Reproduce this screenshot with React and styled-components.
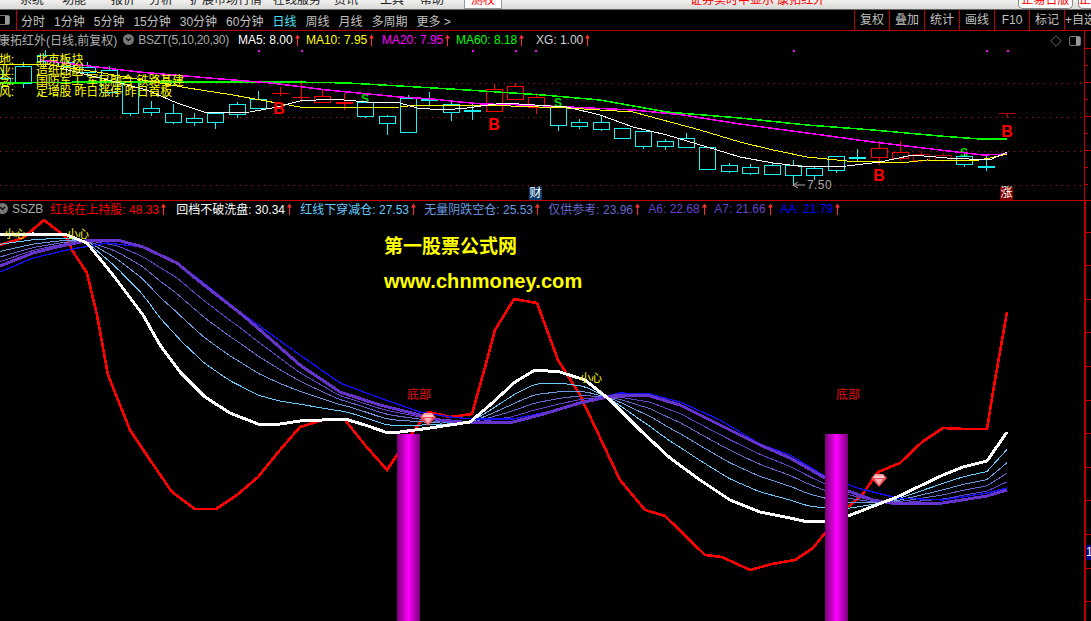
import styled, { createGlobalStyle } from "styled-components";

const GlobalStyle = createGlobalStyle`
  html, body {
    margin: 0;
    padding: 0;
    background: #000;
  }
`;

const FONT = `"Liberation Sans", "Noto Sans CJK SC", sans-serif`;
const RED = "#ff0000";
const CYAN = "#19f0f0";
const DARK = "#c00000";

const Page = styled.div`
  width: 1091px;
  height: 621px;
  overflow: hidden;
  background: #000;
  font-family: ${FONT};
  font-size: 12px;
  display: flex;
  flex-direction: column;
`;

const TopMenu = styled.div`
  height: 9px;
  flex: none;
  display: flex;
  overflow: hidden;
  background: linear-gradient(#f0f0ee, #d8d8d6);
  border-bottom: 1px solid #666;
  color: #222;
`;

const MenuItem = styled.div`
  width: ${(p) => p.$w}px;
  flex: none;
  margin-top: -7px;
  line-height: 14px;
  white-space: nowrap;
  color: ${(p) => (p.$red ? RED : "#222")};
`;

const ActiveTab = styled(MenuItem)`
  margin-top: 0;
  background: #fff;
  border: 1px solid #999;
  border-top: none;
  box-sizing: border-box;
  height: 9px;
  line-height: 0;
  text-align: center;
  color: ${RED};
`;

const RoundButton = styled.div`
  width: ${(p) => p.$w}px;
  flex: none;
  height: 9px;
  box-sizing: border-box;
  margin-right: 5px;
  background: #fff;
  border: 1px solid #888;
  border-top: none;
  border-radius: 0 0 5px 5px;
  line-height: 0;
  text-align: center;
  white-space: nowrap;
  overflow: hidden;
  color: ${RED};
`;

const Toolbar = styled.div`
  height: 20px;
  flex: none;
  display: flex;
  align-items: center;
  border-bottom: 1px solid #c00000;
  color: #c0c0c0;
`;

const PanelToggle = styled.div`
  position: relative;
  width: ${(p) => p.$w}px;
  height: 10px;
  box-sizing: border-box;
  flex: none;
  border: 1px solid #777;
  border-radius: 2px;
  margin-left: ${(p) => p.$ml}px;
  &::after {
    content: "";
    position: absolute;
    right: 0;
    top: 0;
    bottom: 0;
    width: 4px;
    background: #999;
  }
`;

const Periods = styled.div`
  display: flex;
  gap: 9px;
  height: 100%;
  align-items: center;
  margin-left: 6px;
  padding-left: 4px;
  border-left: 1px solid #c00000;
`;

const Period = styled.span`
  color: ${(p) => (p.$active ? "#40e8f8" : "inherit")};
`;

const ToolCells = styled.div`
  margin-left: auto;
  display: flex;
  height: 100%;
`;

const ToolCell = styled.div`
  width: ${(p) => p.$w || 35}px;
  box-sizing: border-box;
  border-left: 1px solid #c00000;
  text-align: center;
  line-height: 20px;
  white-space: nowrap;
  overflow: hidden;
`;

const Panel = styled.div`
  display: flex;
  flex: none;
  height: ${(p) => p.$h}px;
  border-bottom: ${(p) => (p.$last ? "none" : "1px solid #c00000")};
`;

const Plot = styled.div`
  position: relative;
  width: 1084px;
  flex: none;
  overflow: hidden;
`;

const tickLayer = (step) => `repeating-linear-gradient(
  to bottom,
  transparent 0,
  transparent ${step - 1}px,
  #c00000 ${step - 1}px,
  #c00000 ${step}px
)`;

const Axis = styled.div`
  position: relative;
  flex: 1;
  box-sizing: border-box;
  border-left: ${(p) => p.$border}px solid #c00000;
  background-image: ${(p) => tickLayer(p.$long)}, ${(p) => tickLayer(p.$short)};
  background-size: 6px 100%, 3px 100%;
  background-repeat: repeat-y;
  background-position: 0 ${(p) => p.$longOffset}px, 0 ${(p) => p.$shortOffset}px;
`;

const AxisLabel = styled.div`
  position: absolute;
  left: 0;
  top: 344px;
  width: 5px;
  height: 15px;
  background: #000080;
  color: #fff;
  line-height: 15px;
  overflow: hidden;
`;

const Legend = styled.div`
  height: ${(p) => p.$h}px;
  display: flex;
  align-items: center;
  white-space: nowrap;
`;

const Title = styled.span`
  color: #b0b0b0;
  margin-left: -2px;
`;

const Chevron = styled.span`
  width: 11px;
  height: 11px;
  flex: none;
  margin: 0 ${(p) => p.$mr}px 0 ${(p) => p.$ml}px;
  border-radius: 50%;
  background: #777;
  display: flex;
  align-items: center;
  justify-content: center;
`;

const Formula = styled.span`
  color: #a8a8a8;
  letter-spacing: ${(p) => p.$ls || 0}px;
`;

const Reading = styled.span`
  display: flex;
  align-items: center;
  flex: none;
  color: ${(p) => p.$color};
  width: ${(p) => p.$w}px;
  margin-left: ${(p) => p.$ml || 0}px;
`;

const ArrowIcon = styled.svg`
  width: 5px;
  height: 12px;
  margin-left: 2px;
  flex: none;
`;

const CornerIcons = styled.div`
  position: absolute;
  right: 3px;
  top: 4px;
  display: flex;
  align-items: center;
  gap: 7px;
`;

const Chart = styled.svg`
  display: block;
  width: 1084px;
  height: ${(p) => p.$h}px;
`;

const NewsLines = styled.div`
  position: absolute;
  left: 0;
  top: 24px;
  color: #ffff00;
  line-height: 10.6px;
  letter-spacing: -0.2px;
`;

const NewsLine = styled.div`
  display: flex;
  white-space: pre;
`;

const NewsKey = styled.span`
  width: 37px;
  margin-left: -1px;
  flex: none;
`;

const Badge = styled.div`
  position: absolute;
  left: ${(p) => p.$x}px;
  top: ${(p) => p.$y}px;
  width: 13px;
  height: 13px;
  background: ${(p) => p.$bg};
  color: #fff;
  text-align: center;
  line-height: 13px;
`;

const LowPrice = styled.div`
  position: absolute;
  left: 807px;
  top: 147px;
  color: #a8a8a8;
  line-height: 14px;
  letter-spacing: 0.4px;
`;

const Watermark = styled.div`
  position: absolute;
  left: 384px;
  top: 33px;
  color: #ffff00;
  font-weight: bold;
  display: flex;
  flex-direction: column;
  gap: 9px;
`;

const WatermarkTitle = styled.div`
  font-size: 19px;
  line-height: 26px;
`;

const WatermarkUrl = styled.div`
  font-size: 20px;
  line-height: 24px;
  letter-spacing: 0.1px;
`;

const ChartText = styled.text`
  font-family: ${FONT};
  font-size: ${(p) => p.$size || 12}px;
  font-weight: ${(p) => (p.$bold ? "bold" : "normal")};
  fill: ${(p) => p.$color};
  text-anchor: middle;
`;

const candles = [
  [-6, 78, 83, 70, 88, CYAN],
  [15, 66, 83, 62, 88, CYAN],
  [37, 55, 61, 50, 66, CYAN],
  [58, 62, 66, 58, 72, CYAN],
  [79, 67, 72, 62, 76, CYAN],
  [101, 70, 92, 66, 94, CYAN],
  [122, 82, 113, 78, 116, CYAN],
  [143, 108, 112, 101, 116, CYAN],
  [165, 113, 122, 104, 124, CYAN],
  [186, 118, 122, 113, 126, CYAN],
  [207, 113, 122, 113, 129, CYAN],
  [229, 104, 114, 102, 118, CYAN],
  [250, 99, 108, 91, 108, CYAN],
  [272, 93, 93, 87, 96, RED],
  [293, 97, 97, 80, 102, RED],
  [314, 96, 102, 90, 102, RED],
  [336, 102, 104, 93, 110, RED],
  [357, 102, 116, 101, 118, CYAN],
  [379, 116, 123, 115, 135, CYAN],
  [400, 98, 132, 95, 132, CYAN],
  [421, 99, 101, 92, 105, CYAN],
  [443, 104, 112, 100, 121, CYAN],
  [464, 110, 112, 104, 120, CYAN],
  [486, 89, 111, 84, 111, RED],
  [507, 86, 99, 83, 99, RED],
  [528, 97, 107, 93, 114, RED],
  [550, 106, 125, 106, 131, CYAN],
  [571, 122, 126, 119, 129, CYAN],
  [593, 122, 129, 116, 131, CYAN],
  [614, 128, 138, 128, 139, CYAN],
  [635, 131, 146, 131, 149, CYAN],
  [657, 141, 146, 139, 150, CYAN],
  [678, 138, 147, 133, 148, CYAN],
  [699, 147, 169, 147, 169, CYAN],
  [721, 165, 171, 163, 173, CYAN],
  [742, 167, 173, 164, 175, CYAN],
  [764, 165, 174, 163, 175, CYAN],
  [785, 165, 175, 160, 186, CYAN],
  [806, 168, 175, 166, 180, CYAN],
  [828, 156, 170, 156, 173, CYAN],
  [849, 157, 159, 149, 161, CYAN],
  [871, 148, 157, 141, 165, RED],
  [892, 152, 158, 141, 161, RED],
  [913, 154, 160, 151, 163, DARK],
  [935, 155, 160, 153, 162, DARK],
  [956, 156, 164, 152, 167, CYAN],
  [978, 166, 168, 155, 171, CYAN],
  [999, 113, 113, 113, 118, DARK],
];

const priceLines = [
  {
    color: "#00ff00",
    width: 1.5,
    points: [[0, 83], [97, 82], [292, 82], [348, 83], [417, 87], [467, 90], [543, 95], [600, 100], [667, 112], [740, 118], [807, 125], [873, 130], [940, 136], [980, 139], [1007, 139]],
  },
  {
    color: "#ff00ff",
    width: 1.5,
    points: [[40, 60], [97, 67], [139, 72], [209, 78], [271, 83], [327, 90], [400, 97], [433, 99], [460, 102], [483, 104], [527, 105], [590, 108], [633, 110], [683, 115], [740, 124], [807, 133], [873, 142], [940, 150], [983, 155], [1007, 154]],
  },
  {
    color: "#ffff00",
    width: 1,
    points: [[0, 64], [50, 65], [97, 72], [188, 88], [233, 95], [277, 103], [300, 107], [333, 108], [400, 107], [417, 105], [483, 105], [567, 108], [633, 112], [700, 130], [740, 142], [773, 150], [807, 157], [847, 161], [880, 162], [900, 163], [927, 160], [973, 161], [990, 158], [1007, 154]],
  },
  {
    color: "#ffffff",
    width: 1,
    points: [[60, 68], [100, 78], [147, 90], [177, 103], [207, 113], [250, 112], [277, 107], [300, 101], [333, 99], [367, 102], [400, 103], [417, 108], [443, 110], [467, 108], [503, 103], [567, 107], [600, 115], [633, 127], [667, 135], [717, 150], [740, 157], [773, 163], [807, 167], [847, 166], [880, 162], [913, 155], [947, 158], [990, 160], [1007, 152]],
  },
];

const magentaDots = [258, 301, 472, 515, 535, 793, 986, 1007];

const buyMarks = [
  [279, 114],
  [494, 130],
  [1007, 137],
  [879, 181],
];

const sellMarks = [
  [365, 103],
  [558, 107],
  [964, 157],
];

const redLine = [[0, 245], [23, 238], [44, 220], [67, 238], [72, 250], [87, 273], [97, 315], [108, 375], [130, 430], [150, 460], [172, 492], [195, 509], [216, 509], [237, 495], [258, 477], [280, 450], [300, 427], [323, 420], [345, 420], [365, 445], [387, 470], [397, 455], [413, 432], [428, 412], [450, 417], [472, 414], [487, 360], [495, 330], [514, 299], [537, 303], [558, 360], [580, 395], [620, 480], [645, 510], [665, 516], [705, 555], [722, 557], [750, 570], [772, 564], [795, 560], [813, 548], [825, 533], [848, 507], [862, 495], [878, 472], [900, 463], [922, 442], [943, 428], [965, 429], [987, 429], [995, 380], [1007, 312]];

const whiteLine = [[0, 235], [33, 234], [67, 235], [87, 243], [113, 275], [143, 315], [160, 345], [180, 372], [205, 397], [230, 413], [258, 424], [280, 424], [300, 421], [345, 419], [365, 425], [388, 433], [400, 432], [430, 428], [470, 422], [490, 405], [515, 382], [535, 370], [560, 372], [585, 380], [610, 400], [640, 430], [670, 458], [700, 480], [730, 500], [760, 512], [790, 518], [808, 522], [825, 521], [848, 516], [897, 497], [943, 475], [963, 467], [987, 461], [1007, 432]];

const purpleLine = [[0, 266], [33, 253], [57, 247], [90, 240], [117, 240], [143, 247], [177, 263], [200, 282], [240, 313], [260, 330], [300, 365], [340, 392], [380, 405], [420, 415], [440, 420], [473, 423], [513, 422], [540, 415], [580, 403], [607, 397], [620, 395], [650, 396], [680, 405], [720, 425], [760, 445], [790, 458], [825, 478], [848, 491], [873, 500], [897, 504], [943, 503], [987, 496], [1007, 490]];

const blueLine = [[0, 272], [33, 258], [67, 250], [107, 243], [143, 247], [177, 263], [200, 280], [240, 312], [300, 355], [340, 383], [380, 398], [420, 412], [450, 417], [473, 419], [513, 419], [547, 412], [580, 402], [620, 393], [650, 394], [680, 402], [720, 420], [760, 444], [790, 455], [823, 475], [857, 488], [897, 498], [943, 500], [987, 493], [1007, 488]];

const ribbon = [
  { t: 0.3, color: "#66ccff" },
  { t: 0.53, color: "#6a9ae0" },
  { t: 0.71, color: "#6666cc" },
  { t: 0.86, color: "#6640cc" },
];

const toPoints = (points) => points.map((p) => p.join(",")).join(" ");

// y on a polyline at a given x
const yAt = (points, x) => {
  for (let i = 1; i < points.length; i++) {
    if (x <= points[i][0]) {
      const [x0, y0] = points[i - 1];
      const [x1, y1] = points[i];
      return y0 + ((y1 - y0) * (x - x0)) / (x1 - x0);
    }
  }
  return points[points.length - 1][1];
};

const ribbonPoints = (t) => {
  const out = [];
  for (let x = 0; x <= 1007; x += 7) {
    out.push([x, yAt(whiteLine, x) + (yAt(purpleLine, x) - yAt(whiteLine, x)) * t]);
  }
  out.push([1007, 432 + 58 * t]);
  return out;
};

const Arrow = () => (
  <ArrowIcon viewBox="0 0 5 12">
    <path d="M2.5 0.5 L5 4.5 H3 V12 H2 V4.5 H0 Z" fill="#ff3030" />
  </ArrowIcon>
);

const CheckDot = ({ ml = 0, mr = 4 }) => (
  <Chevron $ml={ml} $mr={mr}>
    <svg width="7" height="5" viewBox="0 0 7 5">
      <path d="M1 1 L3.5 3.5 L6 1" fill="none" stroke="#111" strokeWidth="1.4" />
    </svg>
  </Chevron>
);

const Candle = ({ x, top, bottom, wickTop, wickBottom, color }) => {
  const mid = x + 8.5;
  const flat = bottom - top <= 2;
  return (
    <g stroke={color} shapeRendering="crispEdges">
      <line x1={mid} x2={mid} y1={wickTop} y2={top} />
      <line x1={mid} x2={mid} y1={bottom} y2={wickBottom} />
      {flat ? (
        <rect x={x} y={top} width={17} height={Math.max(bottom - top, 1)} fill={color} stroke="none" />
      ) : (
        <rect x={x + 0.5} y={top + 0.5} width={16} height={bottom - top} fill="#000" />
      )}
    </g>
  );
};

const Gem = ({ x, y }) => (
  <g transform={`translate(${x} ${y})`}>
    <polygon points="-8,-2 -4,-6 4,-6 8,-2 0,7" fill="#ee4a55" />
    <polygon points="-4,-6 4,-6 6,-2 -6,-2" fill="#ff9aa0" />
    <polygon points="-4,-1 4,-1 0,5" fill="#ffb0b4" />
    <polyline points="-5,-3 5,-3" stroke="#fff" strokeWidth="1" />
  </g>
);

const Heed = ({ x, y }) => <ChartText x={x} y={y} $color="#ffff00" $size={11}>小心</ChartText>;

const periods = ["分时", "1分钟", "5分钟", "15分钟", "30分钟", "60分钟", "日线", "周线", "月线", "多周期", "更多 >"];
const tools = ["复权", "叠加", "统计", "画线", "F10", "标记"];
const menu = [
  ["系统", 42],
  ["功能", 49],
  ["报价", 38],
  ["分析", 41],
  ["扩展市场行情", 83],
  ["在线服务", 61],
  ["资讯", 46],
  ["工具", 40],
  ["帮助", 44],
];

export default function App() {
  return (
    <Page>
      <GlobalStyle />
      <TopMenu>
        <MenuItem $w={20} />
        {menu.map(([label, w]) => (
          <MenuItem key={label} $w={w}>{label}</MenuItem>
        ))}
        <ActiveTab $w={38}>测权</ActiveTab>
        <MenuItem $w={188} />
        <MenuItem $w={328} $red>证券实时中显示 康拓红外</MenuItem>
        <RoundButton $w={55}>正易日版</RoundButton>
        <RoundButton $w={20}>正易</RoundButton>
      </TopMenu>

      <Toolbar>
        <PanelToggle $w={13} $ml={-3} />
        <Periods>
          {periods.map((label) => (
            <Period key={label} $active={label === "日线"}>{label}</Period>
          ))}
        </Periods>
        <ToolCells>
          {tools.map((label) => (
            <ToolCell key={label}>{label}</ToolCell>
          ))}
          <ToolCell $w={27}>+自选</ToolCell>
        </ToolCells>
      </Toolbar>

      <Panel $h={169}>
        <Plot>
          <Legend $h={17}>
            <Title>康拓红外(日线,前复权)</Title>
            <CheckDot ml={6} mr={4} />
            <Formula $ls={-0.3}>BSZT(5,10,20,30)</Formula>
            <Reading $color="#ffffff" $w={68} $ml={9}>MA5: 8.00<Arrow /></Reading>
            <Reading $color="#ffff00" $w={76}>MA10: 7.95<Arrow /></Reading>
            <Reading $color="#ff00ff" $w={74}>MA20: 7.95<Arrow /></Reading>
            <Reading $color="#00ff00" $w={80}>MA60: 8.18<Arrow /></Reading>
            <Reading $color="#d0d0d0" $w={60}>XG: 1.00<Arrow /></Reading>
          </Legend>
          <CornerIcons>
            <svg width="12" height="12" viewBox="0 0 12 12">
              <path d="M6 .7 L11.3 6 L6 11.3 L.7 6 Z" fill="none" stroke="#666" />
            </svg>
            <PanelToggle $w={12} $ml={0} />
          </CornerIcons>
          <Chart $h={152} viewBox="0 48 1084 152">
            {[83, 117, 151, 185].map((y) => (
              <line key={y} x1="0" x2="1084" y1={y + 0.5} y2={y + 0.5} stroke="#b01010" strokeDasharray="1 5" />
            ))}
            {magentaDots.map((x) => (
              <rect key={x} x={x} y="50" width="2" height="2" fill="#ff00ff" />
            ))}
            {sellMarks.map(([x, y]) => (
              <ChartText key={x} x={x} y={y} $color="#00e000" $size={12} $bold>S</ChartText>
            ))}
            {candles.map(([x, top, bottom, wickTop, wickBottom, color]) => (
              <Candle key={x} x={x} top={top} bottom={bottom} wickTop={wickTop} wickBottom={wickBottom} color={color} />
            ))}
            {priceLines.map((line) => (
              <polyline key={line.color} points={toPoints(line.points)} fill="none" stroke={line.color} strokeWidth={line.width} shapeRendering="crispEdges" />
            ))}
            {buyMarks.map(([x, y]) => (
              <ChartText key={x} x={x} y={y} $color={RED} $size={16} $bold>B</ChartText>
            ))}
            <path d="M793 185 L798 182 M793 185 L798 188 M793 185 H805" stroke="#a8a8a8" fill="none" />
          </Chart>
          <NewsLines>
            <NewsLine><NewsKey>地:</NewsKey>北京板块</NewsLine>
            <NewsLine><NewsKey>业:</NewsKey>造纸印刷</NewsLine>
            <NewsLine><NewsKey>念:</NewsKey>国防军工 军民融合 铁路基建</NewsLine>
            <NewsLine><NewsKey>风:</NewsKey>定增股 昨日涨停 昨日首板</NewsLine>
          </NewsLines>
          <Badge $x={529} $y={156} $bg="#0a3a6a">财</Badge>
          <Badge $x={1000} $y={156} $bg="#800000">涨</Badge>
          <LowPrice>7.50</LowPrice>
        </Plot>
        <Axis $border={1} $long={34} $short={17} $longOffset={-16} $shortOffset={1} />
      </Panel>

      <Panel $h={420} $last>
        <Plot>
          <Legend $h={15}>
            <CheckDot ml={-3} mr={4} />
            <Formula>SSZB</Formula>
            <Reading $color="#ff0000" $w={126} $ml={7}>红线在上持股: 48.33<Arrow /></Reading>
            <Reading $color="#ffffff" $w={124}>回档不破洗盘: 30.34<Arrow /></Reading>
            <Reading $color="#66ccff" $w={124}>红线下穿减仓: 27.53<Arrow /></Reading>
            <Reading $color="#6a9ae0" $w={124}>无量阴跌空仓: 25.53<Arrow /></Reading>
            <Reading $color="#6666cc" $w={100}>仅供参考: 23.96<Arrow /></Reading>
            <Reading $color="#6640cc" $w={66}>A6: 22.68<Arrow /></Reading>
            <Reading $color="#6640cc" $w={66}>A7: 21.66<Arrow /></Reading>
            <Reading $color="#0000ff" $w={66}>AA: 21.79<Arrow /></Reading>
          </Legend>
          <Chart $h={405} viewBox="0 216 1084 405">
            <defs>
              <linearGradient id="pillar" x1="0" x2="1" y1="0" y2="0">
                <stop offset="0" stopColor="#780078" />
                <stop offset="0.5" stopColor="#ff00ff" />
                <stop offset="1" stopColor="#780078" />
              </linearGradient>
            </defs>
            <polyline points={toPoints(redLine)} fill="none" stroke="#ff0000" strokeWidth="2.6" shapeRendering="crispEdges" />
            {ribbon.map((r) => (
              <polyline key={r.color} points={toPoints(ribbonPoints(r.t))} fill="none" stroke={r.color} shapeRendering="crispEdges" />
            ))}
            <polyline points={toPoints(blueLine)} fill="none" stroke="#1010ff" strokeWidth="1.3" shapeRendering="crispEdges" />
            <polyline points={toPoints(purpleLine)} fill="none" stroke="#6633cc" strokeWidth="3" shapeRendering="crispEdges" />
            <polyline points={toPoints(whiteLine)} fill="none" stroke="#ffffff" strokeWidth="3" shapeRendering="crispEdges" />
            <rect x="397" y="434" width="23" height="187" fill="url(#pillar)" />
            <rect x="825" y="434" width="23" height="187" fill="url(#pillar)" />
            <Gem x={428} y={419} />
            <Gem x={879} y={480} />
            <ChartText x={419} y={399} $color="#e01010">底部</ChartText>
            <ChartText x={848} y={399} $color="#e01010">底部</ChartText>
            <Heed x={15} y={238} />
            <Heed x={78} y={238} />
            <Heed x={591} y={382} />
          </Chart>
          <Watermark>
            <WatermarkTitle>第一股票公式网</WatermarkTitle>
            <WatermarkUrl>www.chnmoney.com</WatermarkUrl>
          </Watermark>
        </Plot>
        <Axis $border={2} $long={33.6} $short={33.6} $longOffset={-2} $shortOffset={-2}>
          <AxisLabel>1</AxisLabel>
        </Axis>
      </Panel>
    </Page>
  );
}
